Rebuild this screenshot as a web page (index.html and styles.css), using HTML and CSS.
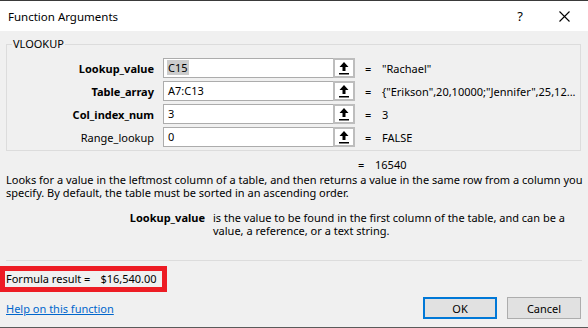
FILE: index.html
```html
<!DOCTYPE html>
<html lang="en">
<head>
    <meta charset="UTF-8">
    <meta name="viewport" content="width=device-width, initial-scale=1.0">
    <title>Function Arguments</title>
    <link rel="stylesheet" href="styles.css">
</head>
<body>
    <div class="dialog">
        <div class="titlebar">
            <span class="title">Function Arguments</span>
            <span class="title-help">?</span>
            <svg class="title-close" width="11" height="11" viewBox="0 0 11 11">
                <path d="M0.5 0.5 L10.5 10.5 M10.5 0.5 L0.5 10.5" stroke="#000" stroke-width="1.1" fill="none"/>
            </svg>
        </div>

        <div class="content">
            <div class="group">
                <span class="group-title">VLOOKUP</span>

                <div class="arg-row">
                    <label class="arg-label bold">Lookup_value</label>
                    <div class="arg-input"><span class="selected">C15</span></div>
                    <button class="ref-btn">
                        <svg width="12" height="14" viewBox="0 0 12 14"><path d="M6 1 L10.5 6 L7.5 6 L7.5 10 L4.5 10 L4.5 6 L1.5 6 Z M1 12 L11 12 L11 13.5 L1 13.5 Z" fill="#000"/></svg>
                    </button>
                    <span class="arg-eq">=</span>
                    <span class="arg-value">"Rachael"</span>
                </div>
                <div class="arg-row">
                    <label class="arg-label bold">Table_array</label>
                    <div class="arg-input">A7:C13</div>
                    <button class="ref-btn">
                        <svg width="12" height="14" viewBox="0 0 12 14"><path d="M6 1 L10.5 6 L7.5 6 L7.5 10 L4.5 10 L4.5 6 L1.5 6 Z M1 12 L11 12 L11 13.5 L1 13.5 Z" fill="#000"/></svg>
                    </button>
                    <span class="arg-eq">=</span>
                    <span class="arg-value">{"Erikson",20,10000;"Jennifer",25,12...</span>
                </div>
                <div class="arg-row">
                    <label class="arg-label bold">Col_index_num</label>
                    <div class="arg-input">3</div>
                    <button class="ref-btn">
                        <svg width="12" height="14" viewBox="0 0 12 14"><path d="M6 1 L10.5 6 L7.5 6 L7.5 10 L4.5 10 L4.5 6 L1.5 6 Z M1 12 L11 12 L11 13.5 L1 13.5 Z" fill="#000"/></svg>
                    </button>
                    <span class="arg-eq">=</span>
                    <span class="arg-value">3</span>
                </div>
                <div class="arg-row">
                    <label class="arg-label">Range_lookup</label>
                    <div class="arg-input">0</div>
                    <button class="ref-btn">
                        <svg width="12" height="14" viewBox="0 0 12 14"><path d="M6 1 L10.5 6 L7.5 6 L7.5 10 L4.5 10 L4.5 6 L1.5 6 Z M1 12 L11 12 L11 13.5 L1 13.5 Z" fill="#000"/></svg>
                    </button>
                    <span class="arg-eq">=</span>
                    <span class="arg-value">FALSE</span>
                </div>
            </div>

            <div class="result-row">
                <span class="arg-eq">=</span>
                <span class="arg-value">16540</span>
            </div>

            <p class="description">Looks for a value in the leftmost column of a table, and then returns a value in the same row from a column you specify. By default, the table must be sorted in an ascending order.</p>

            <div class="arg-help">
                <span class="arg-help-name">Lookup_value</span>
                <span class="arg-help-text">is the value to be found in the first column of the table, and can be a value, a reference, or a text string.</span>
            </div>

            <div class="separator"></div>

            <div class="footer">
                <div class="footer-left">
                    <div class="formula-result">Formula result =<span class="formula-value">$16,540.00</span></div>
                    <a href="#" class="help-link">Help on this function</a>
                </div>
                <div class="footer-buttons">
                    <button class="btn btn-default">OK</button>
                    <button class="btn">Cancel</button>
                </div>
            </div>
        </div>
    </div>
</body>
</html>
```

FILE: styles.css
```css
* {
    box-sizing: border-box;
}

body {
    margin: 0;
    font-family: 'Noto Sans', 'Open Sans', sans-serif;
    font-size: 11px;
    color: #000;
    background: #f0f0f0;
}

.dialog {
    width: 588px;
    height: 328px;
    display: flex;
    flex-direction: column;
    border-top: 1px solid #3a3a3a;
    border-bottom: 1px solid #5a5a5a;
    background: #f0f0f0;
}

.titlebar {
    height: 30px;
    background: #fff;
    display: flex;
    align-items: center;
    padding-left: 8px;
}

.title {
    font-size: 11.5px;
    flex: 1;
}

.title-help {
    font-size: 13px;
    margin-right: 36px;
}

.title-close {
    margin-right: 18px;
}

.content {
    flex: 1;
    display: flex;
    flex-direction: column;
}

/* argument group */
.group {
    position: relative;
    margin: 13px 7px 0 6px;
    border: 1px solid #dcdcdc;
    padding: 13px 0 3px 0;
    display: flex;
    flex-direction: column;
    gap: 3px;
}

.group-title {
    position: absolute;
    top: -8px;
    left: 5px;
    padding: 0 1px;
    line-height: 14px;
    background: #f0f0f0;
}

.arg-row {
    display: grid;
    grid-template-columns: 156px 170px 22px 27px 1fr;
    height: 20px;
    align-items: center;
}

.arg-label {
    text-align: right;
    padding-right: 9px;
}

.bold {
    font-weight: bold;
}

.arg-input {
    height: 20px;
    background: #fff;
    border: 1px solid #acacac;
    border-right: none;
    padding: 0 0 0 4px;
    line-height: 18px;
}

.selected {
    background: #cccccc;
    padding: 0 1px;
    margin-left: -1px;
}

.ref-btn {
    width: 22px;
    height: 20px;
    padding: 0;
    border: 2px solid #bdbdbd;
    background: #fff;
    display: flex;
    align-items: center;
    justify-content: center;
}

.arg-eq {
    padding-left: 10px;
}

.arg-value {
    white-space: nowrap;
}

.result-row {
    display: grid;
    grid-template-columns: 348px 27px 1fr;
    height: 16px;
    align-items: center;
    margin-top: 5px;
}

.result-row .arg-eq {
    grid-column: 2;
}

.description {
    margin: 1px 0 0 6px;
    line-height: 13px;
}

.arg-help {
    display: grid;
    grid-template-columns: 199px 1fr;
    column-gap: 8px;
    margin: 12px 0 0 6px;
    line-height: 13px;
}

.arg-help-name {
    font-weight: bold;
    text-align: right;
}

.separator {
    margin: 23px 6px 0 6px;
    height: 1px;
    background: #dcdcdc;
}

/* footer */
.footer {
    display: flex;
    justify-content: space-between;
    align-items: flex-end;
    margin-top: 5px;
    padding-right: 7px;
}

.footer-left {
    display: flex;
    flex-direction: column;
    align-items: flex-start;
}

.formula-result {
    height: 26px;
    border: 5px solid #ed1c24;
    padding: 0 0 0 1px;
    width: 167px;
    line-height: 16px;
    white-space: nowrap;
}

.formula-value {
    margin-left: 10px;
}

.help-link {
    margin: 9px 0 2px 6px;
    line-height: 16px;
    color: #0066cc;
    text-decoration: underline;
}

.footer-buttons {
    display: flex;
    gap: 10px;
}

.btn {
    width: 74px;
    height: 22px;
    font-family: inherit;
    font-size: 11px;
    background: #e1e1e1;
    border: 1px solid #adadad;
    color: #000;
    padding: 0;
}

.btn-default {
    border: 2px solid #0078d7;
}
```
